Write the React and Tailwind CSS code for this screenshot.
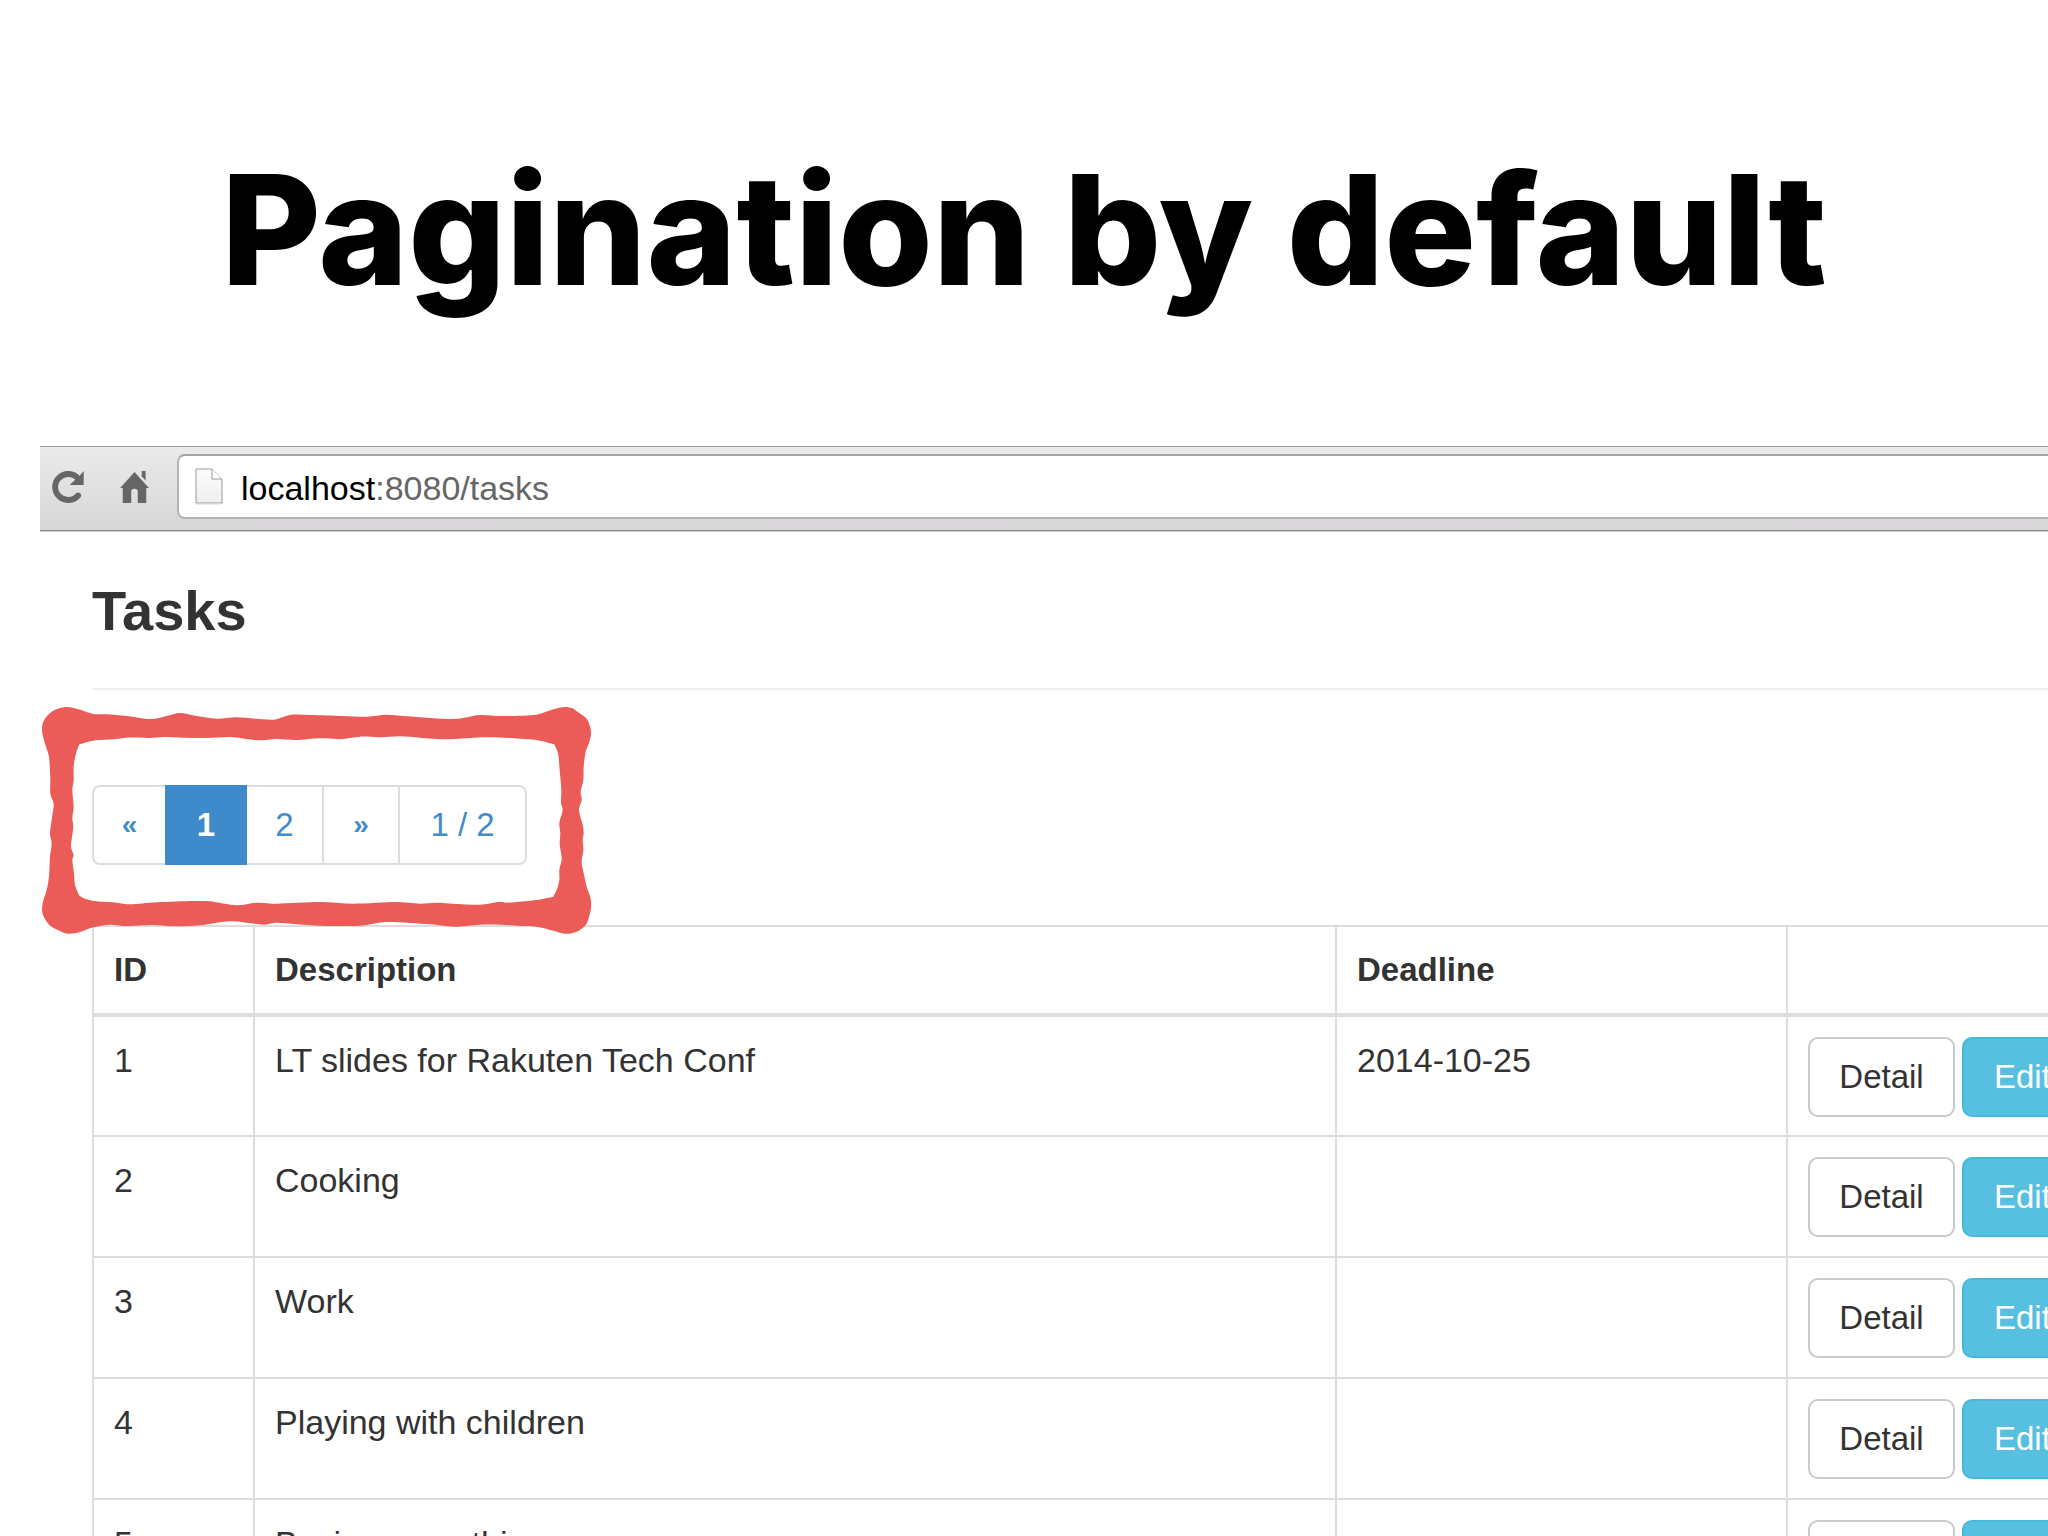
import React, { useState } from "react";

const tasks = [
  { id: 1, description: "LT slides for Rakuten Tech Conf", deadline: "2014-10-25" },
  { id: 2, description: "Cooking", deadline: "" },
  { id: 3, description: "Work", deadline: "" },
  { id: 4, description: "Playing with children", deadline: "" },
  { id: 5, description: "Buying something", deadline: "" },
];

// Outline of the hand-drawn marker frame, clockwise from the top left
const outerPoints = [
  [37, 130], [40, 95], [68, 63], [108, 51], [145, 58], [190, 72], [230, 73],
  [290, 78], [360, 87], [410, 78], [450, 69], [500, 78], [560, 86], [620, 82],
  [730, 89], [780, 75], [840, 75], [940, 78], [1010, 80], [1070, 74],
  [1120, 78], [1270, 87], [1350, 75], [1410, 78], [1520, 74], [1570, 58],
  [1605, 51], [1627, 55], [1640, 64], [1671, 88], [1683, 125], [1678, 155],
  [1667, 185], [1661, 230], [1660, 270], [1652, 305], [1655, 330],
  [1647, 360], [1658, 405], [1661, 430], [1658, 450], [1660, 480],
  [1655, 515], [1661, 550], [1670, 590], [1682, 625], [1683, 655],
  [1678, 677], [1667, 705], [1640, 725], [1605, 731], [1570, 722],
  [1520, 710], [1470, 708], [1410, 704], [1350, 704], [1270, 710],
  [1200, 703], [1070, 696], [990, 707], [870, 707], [740, 698], [700, 704],
  [600, 694], [520, 705], [440, 709], [370, 705], [290, 708], [240, 704],
  [190, 712], [150, 726], [115, 731], [88, 722], [58, 705], [38, 672],
  [38, 640], [50, 600], [57, 560], [60, 500], [65, 460], [60, 430],
  [68, 370], [71, 340], [61, 312], [61, 270], [57, 200], [48, 170],
];

// Corners are listed twice so the curve stays sharp there
const innerPoints = [
  [148, 163], [148, 163], [190, 152], [250, 148], [290, 143], [360, 144],
  [400, 141], [460, 143], [530, 144], [600, 141], [650, 147], [690, 151],
  [740, 147], [800, 150], [870, 145], [930, 147], [990, 140], [1050, 142],
  [1110, 139], [1170, 143], [1250, 148], [1370, 142], [1470, 146],
  [1520, 150], [1573, 163], [1573, 163], [1584, 190], [1589, 240],
  [1594, 300], [1593, 340], [1598, 360], [1588, 400], [1591, 430],
  [1589, 460], [1594, 495], [1595, 510], [1588, 540], [1588, 570],
  [1580, 600], [1570, 620], [1570, 620], [1520, 630], [1430, 638],
  [1410, 635], [1350, 644], [1270, 641], [1220, 638], [1170, 641],
  [1100, 636], [970, 641], [870, 636], [740, 641], [680, 638], [620, 646],
  [540, 634], [490, 633], [380, 637], [300, 643], [260, 638], [200, 634],
  [165, 626], [148, 617], [148, 617], [135, 585], [132, 550], [127, 510],
  [131, 495], [123, 470], [130, 410], [127, 385], [131, 350], [127, 300],
  [131, 270], [131, 230], [138, 190],
];

// Closed smooth curve through all the points
const smoothPath = (points) => {
  const n = points.length;
  let d = `M${points[0][0]} ${points[0][1]}`;
  for (let i = 0; i < n; i++) {
    const p0 = points[(i - 1 + n) % n];
    const p1 = points[i];
    const p2 = points[(i + 1) % n];
    const p3 = points[(i + 2) % n];
    // shorter handles next to short segments keep the line from looping
    const len = Math.hypot(p2[0] - p1[0], p2[1] - p1[1]);
    const k1 = Math.min(1 / 6, len / 3 / (Math.hypot(p2[0] - p0[0], p2[1] - p0[1]) || 1));
    const k2 = Math.min(1 / 6, len / 3 / (Math.hypot(p3[0] - p1[0], p3[1] - p1[1]) || 1));
    const c1 = [p1[0] + (p2[0] - p0[0]) * k1, p1[1] + (p2[1] - p0[1]) * k1];
    const c2 = [p2[0] - (p3[0] - p1[0]) * k2, p2[1] - (p3[1] - p1[1]) * k2];
    d += `C${c1[0]} ${c1[1]} ${c2[0]} ${c2[1]} ${p2[0]} ${p2[1]}`;
  }
  return d + "Z";
};

const framePath = smoothPath(outerPoints) + smoothPath(innerPoints);

const MarkerFrame = () => (
  <svg
    viewBox="30 45 1656 696"
    className="absolute -left-[52px] -top-20 w-[552px] h-[232px] max-w-none pointer-events-none"
    aria-hidden="true"
  >
    <path d={framePath} fill="#eb5b57" fillRule="evenodd" />
  </svg>
);

const ReloadIcon = () => (
  <svg viewBox="0 0 98 98" className="w-8 h-8" aria-hidden="true">
    <path
      d="M80 75 A40 40 0 1 1 80 23"
      fill="none"
      stroke="#666"
      strokeWidth="18"
      strokeLinecap="round"
    />
    <path d="M97 0 V43 H54 L68 30 L84 15 Z" fill="#666" />
  </svg>
);

const HomeIcon = () => (
  <svg viewBox="0 0 88 98" className="w-[29px] h-8" aria-hidden="true">
    <path
      d="M44 3 L88 52 H80 V98 H54 V62 Q54 54 44 54 Q34 54 34 62 V98 H8 V52 H0 Z"
      fill="#666"
    />
    <path d="M66 0 H78 V29 L66 16 Z" fill="#666" />
  </svg>
);

const PageIcon = () => (
  <svg viewBox="0 0 28 37" className="w-7 h-[37px]" aria-hidden="true">
    <defs>
      <linearGradient id="sheet" x1="0" y1="0" x2="0" y2="1">
        <stop offset="0" stopColor="#fdfdfd" />
        <stop offset="1" stopColor="#eee" />
      </linearGradient>
    </defs>
    <path d="M1 1 H17 L27 11 V35 H1 Z" fill="url(#sheet)" stroke="#999" />
    <path d="M17 1 V11 H27" fill="#fff" stroke="#999" />
    <path d="M1 36 H27" stroke="#ddd" />
  </svg>
);

const Toolbar = () => (
  <div className="ml-10 h-[85px] pb-1 flex items-center border-y border-t-[#999] border-b-[#888] bg-linear-to-b from-[#ebebeb] to-[#d8d6d8] shadow-[0_1px_0_#ccc]">
    <button type="button" aria-label="Reload" className="ml-3">
      <ReloadIcon />
    </button>
    <button type="button" aria-label="Home" className="ml-9">
      <HomeIcon />
    </button>
    <div className="ml-7 -mr-3 flex-1 h-[65px] flex items-center gap-[18px] pl-4 rounded-lg border-2 border-[#b5b3b5] border-t-[#a5a5a5] bg-white">
      <PageIcon />
      <a href="#tasks" className="pt-0.5 text-[34px] leading-10 text-[#666]">
        <span className="text-black">localhost</span>:8080/tasks
      </a>
    </div>
  </div>
);

const Pagination = ({ page, onChange }) => {
  const items = [
    { label: "«", target: 1, style: "w-[75px] rounded-l-lg font-bold text-[28px]" },
    { label: "1", target: 1, style: "w-[82px]" },
    { label: "2", target: 2, style: "w-[79px]" },
    { label: "»", target: 2, style: "w-[78px] font-bold text-[28px]" },
    { label: "1 / 2", target: page, style: "w-[129px] rounded-r-lg" },
  ];

  return (
    <nav aria-label="Pagination" className="relative flex">
      {items.map((item) => (
        <button
          key={item.label}
          type="button"
          onClick={() => onChange(item.target)}
          className={`h-20 -mr-0.5 border-2 text-center ${item.style} ${
            item.label === String(page)
              ? "relative bg-[#3e8acb] border-[#3e8acb] text-white font-bold"
              : "bg-white border-[#dddcde] text-[#428bca]"
          }`}
        >
          {item.label}
        </button>
      ))}
      <MarkerFrame />
    </nav>
  );
};

const TaskTable = () => (
  <table className="w-[2280px] table-fixed border-collapse text-left">
    <colgroup>
      <col className="w-[161px]" />
      <col className="w-[1082px]" />
      <col className="w-[451px]" />
      <col />
    </colgroup>
    <thead>
      <tr className="h-[89px] border-t-2 border-b-4 border-[#dddcde]">
        {["ID", "Description", "Deadline", ""].map((title, index) => (
          <th key={index} className="border-x-2 border-[#dddcde] px-5 font-bold">
            {title}
          </th>
        ))}
      </tr>
    </thead>
    <tbody className="text-[34px]">
      {tasks.map((task) => (
        <tr key={task.id} className="h-[121px] border-b-2 border-[#dddcde] align-top">
          <td className="border-x-2 border-[#dddcde] px-5 pt-5">{task.id}</td>
          <td className="border-x-2 border-[#dddcde] px-5 pt-5">{task.description}</td>
          <td className="border-x-2 border-[#dddcde] px-5 pt-5">{task.deadline}</td>
          <td className="border-x-2 border-[#dddcde] px-5 pt-5">
            <div className="flex gap-[7px] text-[33px]">
              <button
                type="button"
                className="h-20 w-[147px] rounded-[10px] border-2 border-[#ccc9ce] bg-white"
              >
                Detail
              </button>
              <button
                type="button"
                className="h-20 px-[30px] rounded-[10px] border-2 border-[#46b8da] bg-[#57bfe0] text-white"
              >
                Edit
              </button>
            </div>
          </td>
        </tr>
      ))}
    </tbody>
  </table>
);

const App = () => {
  const [page, setPage] = useState(1);

  return (
    <div className="h-screen overflow-hidden bg-white font-['Liberation_Sans',Arial,sans-serif] text-[33px] leading-[46px] text-[#333]">
      <h1 className="pt-[138px] h-[446px] text-center font-[Inter,sans-serif] font-extrabold text-[153px] leading-[184px] text-black">
        Pagination by default
      </h1>
      <Toolbar />
      <main className="pl-[92px]">
        <h2 className="h-[159px] pt-12 border-b-2 border-[#eee] text-[56px] leading-[64px] font-bold">
          Tasks
        </h2>
        <div className="pt-[95px] pb-[60px]">
          <Pagination page={page} onChange={setPage} />
        </div>
        <TaskTable />
      </main>
    </div>
  );
};

export default App;
